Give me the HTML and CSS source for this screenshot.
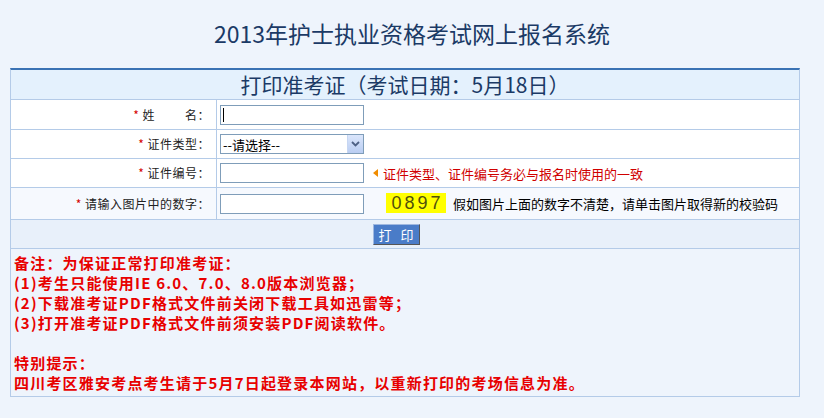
FILE: index.html
```html
<!DOCTYPE html>
<html lang="zh-CN">
<head>
<meta charset="utf-8">
<title>2013年护士执业资格考试网上报名系统</title>
<link rel="stylesheet" href="styles.css">
</head>
<body>
<h1 class="title">2013年护士执业资格考试网上报名系统</h1>
<div class="panel">
  <div class="panel-head">打印准考证（考试日期：5月18日）</div>
  <div class="form">
    <div class="row r1">
      <div class="label"><span class="req">*</span> 姓<span class="gap"></span>名：</div>
      <div class="field"><span class="input-wrap"><input class="txt" type="text"><span class="caret"></span></span></div>
    </div>
    <div class="row">
      <div class="label"><span class="req">*</span> 证件类型：</div>
      <div class="field">
        <span class="select-wrap">
          <select class="sel"><option>--请选择--</option></select>
          <span class="arrow"><svg width="9" height="6" viewBox="0 0 9 6"><path d="M1 1 L4.5 4.5 L8 1" fill="none" stroke="#4d6185" stroke-width="1.8"/></svg></span>
        </span>
      </div>
    </div>
    <div class="row">
      <div class="label"><span class="req">*</span> 证件编号：</div>
      <div class="field"><input class="txt" type="text"><span class="tri"></span><span class="hint">证件类型、证件编号务必与报名时使用的一致</span></div>
    </div>
    <div class="row row-code">
      <div class="label"><span class="req">*</span> 请输入图片中的数字：</div>
      <div class="field"><input class="txt" type="text"><span class="code">0897</span><span class="tip">假如图片上面的数字不清楚，请单击图片取得新的校验码</span></div>
    </div>
  </div>
  <div class="actions"><button class="btn" type="button">打 印</button></div>
  <div class="notes">
    <p>备注：为保证正常打印准考证：</p>
    <p>(1)考生只能使用IE 6.0、7.0、8.0版本浏览器；</p>
    <p>(2)下载准考证PDF格式文件前关闭下载工具如迅雷等；</p>
    <p>(3)打开准考证PDF格式文件前须安装PDF阅读软件。</p>
    <p class="blank"></p>
    <p>特别提示：</p>
    <p>四川考区雅安考点考生请于5月7日起登录本网站，以重新打印的考场信息为准。</p>
  </div>
</div>
</body>
</html>
```
FILE: styles.css
```css
html, body {
  margin: 0;
  padding: 0;
  background: #eef4fc;
}
body {
  font-family: "Liberation Sans", "Noto Sans CJK SC", sans-serif;
  font-size: 12px;
  color: #000;
}
.title {
  margin: 0;
  height: 68px;
  line-height: 66px;
  text-align: center;
  font-family: "Noto Sans CJK SC", sans-serif;
  font-weight: normal;
  font-size: 23px;
  color: #1b3a66;
}
.panel {
  width: 788px;
  margin-left: 10px;
  border: 1px solid #b4cbe8;
  border-top: 2px solid #3a72b4;
}
.panel-head {
  height: 29px;
  line-height: 28px;
  text-align: center;
  background: #e4f1fd;
  border-bottom: 1px solid #b4cbe8;
  font-family: "Noto Sans CJK SC", sans-serif;
  font-size: 21px;
  color: #1b3a66;
}
.row {
  display: grid;
  grid-template-columns: 206px 1fr;
  height: 28px;
  border-bottom: 1px solid #b4cbe8;
  background: #fff;
}
.r1 {
  height: 29px;
}
.row-code {
  height: 31px;
  background: #f6f9fe;
}
.label {
  display: block;
  text-align: right;
  padding-right: 6px;
  border-right: 1px solid #b4cbe8;
  height: 100%;
  line-height: 28px;
  font-family: "Noto Sans CJK SC", sans-serif;
  font-size: 12px;
  letter-spacing: 0.5px;
  color: #222;
  white-space: nowrap;
}
.r1 .label {
  line-height: 29px;
}
.row-code .label {
  line-height: 31px;
}
.req {
  color: #d40000;
}
.gap {
  display: inline-block;
  width: 30px;
}
.field {
  display: flex;
  align-items: center;
  padding-left: 3px;
}
.input-wrap {
  position: relative;
  display: inline-block;
  height: 20px;
}
.txt {
  box-sizing: border-box;
  width: 144px;
  height: 20px;
  margin: 0;
  padding: 0 3px;
  border: 1px solid #7f9db9;
  background: #fff;
  font-size: 12px;
  outline: none;
  vertical-align: top;
}
.caret {
  position: absolute;
  left: 3px;
  top: 3px;
  width: 1px;
  height: 14px;
  background: #000;
}
.select-wrap {
  position: relative;
  display: inline-block;
  height: 20px;
}
.sel {
  box-sizing: border-box;
  width: 144px;
  height: 20px;
  margin: 0;
  padding: 0 0 0 2px;
  border: 1px solid #7f9db9;
  background: #fff;
  font-family: "Noto Sans CJK SC", sans-serif;
  font-size: 13px;
  color: #000;
  appearance: none;
  -webkit-appearance: none;
  border-radius: 0;
  outline: none;
  vertical-align: top;
}
.arrow {
  position: absolute;
  right: 1px;
  top: 1px;
  width: 16px;
  height: 18px;
  display: flex;
  align-items: center;
  justify-content: center;
  background: linear-gradient(#dbe6fb, #b9cdf2);
  box-sizing: border-box;
  border-left: 1px solid #c6d6f2;
}
.tri {
  width: 0;
  height: 0;
  margin-left: 9px;
  border-top: 4px solid transparent;
  border-bottom: 4px solid transparent;
  border-right: 5px solid #f08c00;
}
.hint {
  margin-left: 5px;
  font-family: "Noto Sans CJK SC", sans-serif;
  font-size: 13px;
  color: #d00000;
}
.code {
  margin-left: 22px;
  width: 60px;
  height: 20px;
  line-height: 20px;
  text-align: center;
  background: #ffff00;
  font-family: "Liberation Sans", sans-serif;
  font-size: 18px;
  letter-spacing: 3px;
  text-indent: 3px;
  color: #50500c;
  margin-top: -2px;
}
.tip {
  margin-left: 7px;
  font-family: "Noto Sans CJK SC", sans-serif;
  font-size: 13px;
  color: #000;
}
.actions {
  height: 28px;
  border-bottom: 1px solid #b4cbe8;
  background: #e8f0fa;
  display: flex;
  align-items: center;
  justify-content: center;
  padding-right: 18px;
}
.btn {
  width: 47px;
  height: 21px;
  margin: 0;
  padding: 0;
  background: #4a7cc8;
  color: #fff;
  font-family: "Noto Sans CJK SC", sans-serif;
  font-size: 13px;
  letter-spacing: 3px;
  text-indent: 3px;
  border: 1px solid;
  border-color: #9fb8e0 #555 #555 #9fb8e0;
  border-radius: 0;
}
.notes {
  padding: 4px 0 3px 3px;
  font-family: "Noto Sans CJK SC", sans-serif;
  font-weight: bold;
  font-size: 15px;
  letter-spacing: 1.2px;
  line-height: 20px;
  color: #e80000;
}
.notes p {
  margin: 0;
  height: 20px;
  white-space: nowrap;
}
```
